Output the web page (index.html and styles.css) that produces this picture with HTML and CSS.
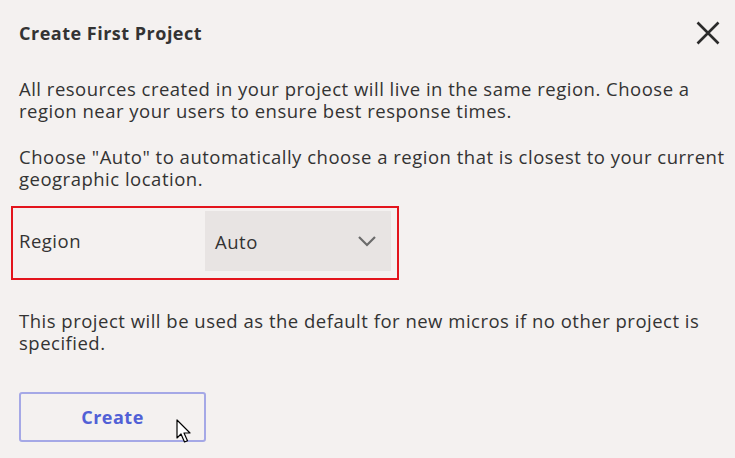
FILE: index.html
```html
<!DOCTYPE html>
<html>
<head>
<meta charset="utf-8">
<link rel="stylesheet" href="styles.css">
</head>
<body>
<div class="modal">
  <div class="header">
    <h1 class="title">Create First Project</h1>
    <button class="close" aria-label="Close">
      <svg width="24" height="24" viewBox="0 0 24 24"><path d="M1.5 1.5 L22.5 22.5 M22.5 1.5 L1.5 22.5" stroke="#2b2b2b" stroke-width="2.6" fill="none"/></svg>
    </button>
  </div>
  <p class="text first">All resources created in your project will live in the same region. Choose a region near your users to ensure best response times.</p>
  <p class="text">Choose "Auto" to automatically choose a region that is closest to your current geographic location.</p>
  <div class="region">
    <span class="label">Region</span>
    <div class="select">
      <span>Auto</span>
      <svg width="20" height="12" viewBox="0 0 20 12"><path d="M2 2 L10 10 L18 2" stroke="#6b6b6b" stroke-width="2.2" fill="none"/></svg>
    </div>
  </div>
  <p class="text note">This project will be used as the default for new micros if no other project is specified.</p>
  <div class="actions">
    <button class="create">Create</button>
    <svg class="cursor" width="17" height="25" viewBox="0 0 17 25"><path d="M1 1 L1 19 L5 15 L8.5 23 L11.5 21.7 L8 14 L14 14 Z" fill="#fff" stroke="#000" stroke-width="1.2" stroke-linejoin="round"/></svg>
  </div>
</div>
</body>
</html>
```
FILE: styles.css
```css
* { box-sizing: border-box; }
html, body { margin: 0; padding: 0; }
body {
  background: #f4f1f0;
  font-family: "Open Sans", "Noto Sans", sans-serif;
  color: #333;
  width: 735px;
  height: 458px;
  overflow: hidden;
  letter-spacing: 0.5px;
}
.modal {
  padding: 0 5px 0 19px;
}
.header {
  display: flex;
  justify-content: space-between;
  align-items: center;
  height: 66px;
}
.title {
  margin: 0;
  font-size: 18px;
  font-weight: 700;
  color: #333;
}
.close {
  background: none;
  border: 0;
  padding: 0;
  margin-right: 10px;
  display: flex;
  width: 24px;
  height: 24px;
}
.text {
  margin: 0;
  font-size: 18.5px;
  line-height: 22px;
}
.first { margin-top: 12px; margin-bottom: 24px; }
.region {
  margin: 16px 0 0 -8px;
  width: 388px;
  height: 74px;
  border: 2px solid #e3141c;
  display: flex;
  align-items: flex-start;
  padding: 3px 6px 0 6px;
}
.label {
  font-size: 18.5px;
  width: 186px;
  line-height: 60px;
}
.select {
  flex: 1;
  height: 60px;
  background: #e8e4e3;
  display: flex;
  align-items: center;
  justify-content: space-between;
  padding: 0 14px 0 10px;
  font-size: 18.5px;
}
.note { margin-top: 30px; }
.actions {
  position: relative;
  margin-top: 38px;
}
.create {
  width: 187px;
  height: 50px;
  background: transparent;
  border: 2px solid #a5a8e6;
  border-radius: 3px;
  color: #5160d6;
  font-family: inherit;
  font-size: 18px;
  font-weight: 700;
  letter-spacing: 0.5px;
}
.cursor {
  position: absolute;
  left: 157px;
  top: 27px;
}
```
